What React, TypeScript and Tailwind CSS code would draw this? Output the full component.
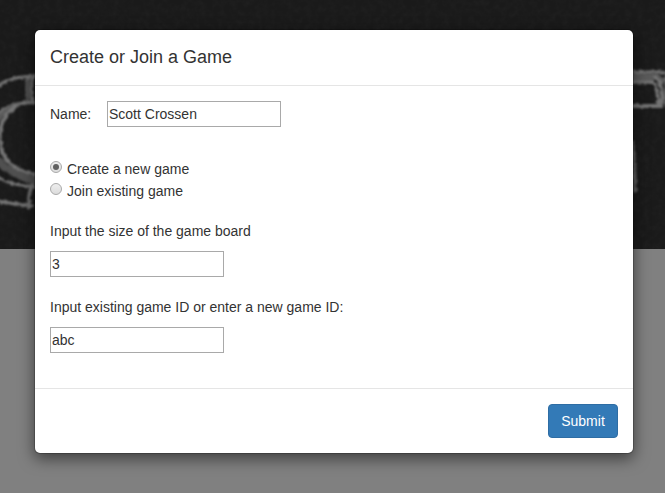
import { useState } from "react";

function Chalkboard() {
  return (
    <svg className="block h-[249px] w-[665px]" viewBox="0 0 665 249" aria-hidden="true">
      <defs>
        <filter id="grain" x="0" y="0" width="100%" height="100%" colorInterpolationFilters="sRGB">
          <feTurbulence type="fractalNoise" baseFrequency="0.16" numOctaves="3" seed="4" />
          <feColorMatrix values="0 0 0 0 0.5  0 0 0 0 0.5  0 0 0 0 0.5  0.5 0 0 0 -0.17" />
        </filter>
        <filter id="chalk" filterUnits="userSpaceOnUse" x="-10" y="0" width="690" height="249" colorInterpolationFilters="sRGB">
          <feTurbulence type="fractalNoise" baseFrequency="0.25" numOctaves="2" seed="8" result="n" />
          <feDisplacementMap in="SourceGraphic" in2="n" scale="4" xChannelSelector="R" yChannelSelector="G" result="d" />
          <feGaussianBlur in="d" stdDeviation="0.9" />
        </filter>
      </defs>
      <rect width="665" height="249" fill="#1a1a1a" />
      <rect width="665" height="249" filter="url(#grain)" opacity="0.18" />
      <g filter="url(#chalk)" fill="none" stroke="#747474" strokeWidth="3" strokeLinecap="round">
        <path d="M-3 87C5 80 16 76 37 76" />
        <path d="M28 78Q26 90 28 101M33 76Q30 90 33 102" />
        <path d="M28 82V100" stroke="#505050" strokeWidth="5" />
        <path d="M-3 115C5 106 16 103 38 102" strokeWidth="3.5" />
        <path d="M-3 122C2 112 8 107 18 104" stroke="#5c5c5c" strokeWidth="4" />
        <path d="M18 105C5 113 -3 126 1 145C3 162 17 172 38 175" strokeWidth="3.5" />
        <path d="M-3 160C6 169 19 177 37 181" stroke="#505050" strokeWidth="8" />
        <path d="M-3 177C7 183 18 186 35 187" />
        <path d="M-3 201C9 203 20 205 32 206M32 185Q28 195 29 207" strokeWidth="3.5" />
        <path d="M628 72H658Q663 71 668 75" strokeWidth="3" />
        <path d="M628 77H656L662 80" stroke="#5a5a5a" strokeWidth="7" />
        <path d="M628 82H651C658 83 657 95 659 106M656 77Q664 87 662 103" strokeWidth="3.5" />
        <path d="M628 106H661" strokeWidth="4" />
        <path d="M667 75V104" stroke="#666" strokeWidth="5" />
        <path d="M632 142Q635 158 635 191" stroke="#626262" strokeWidth="3.5" />
      </g>
    </svg>
  );
}

const inputClass =
  "block h-[26px] w-[174px] border border-[#a9a9a9] bg-white px-px py-0 text-sm leading-5 text-[#333] outline-none";

function Radio({ checked, label, onSelect }: { checked: boolean; label: string; onSelect: () => void }) {
  return (
    <label className="flex h-[22px] items-start gap-[5px]">
      <input type="radio" name="mode" checked={checked} onChange={onSelect} className="sr-only" />
      <span className="mt-[3px] flex size-3 shrink-0 items-center justify-center rounded-full border border-[#a9a9a9] bg-linear-to-b from-[#eeeeee] to-[#dcdcdc]">
        {checked && <span className="size-1.5 rounded-full bg-[#606060]" />}
      </span>
      <span className="pt-px leading-5">{label}</span>
    </label>
  );
}

export default function App() {
  const [mode, setMode] = useState("create");
  return (
    <div className="relative h-[493px] w-[665px] overflow-hidden bg-[#808080] font-['Liberation_Sans',Arial,sans-serif] text-sm text-[#333]">
      <Chalkboard />
      <div
        role="dialog"
        className="absolute top-[29px] left-[34px] flex h-[425px] w-[600px] flex-col rounded-md border border-black/20 bg-white bg-clip-padding shadow-[0_5px_15px_rgba(0,0,0,0.5)]"
      >
        <header className="h-14 border-b border-[#e5e5e5] px-[15px] pt-[14px]">
          <h4 className="text-lg leading-[26px] font-normal">Create or Join a Game</h4>
        </header>
        <main className="flex-1 px-[15px] pt-[15px]">
          <label className="flex items-center">
            <span className="w-[57px]">Name:</span>
            <input className={inputClass} defaultValue="Scott Crossen" />
          </label>
          <div className="mt-[31px]">
            <Radio checked={mode === "create"} label="Create a new game" onSelect={() => setMode("create")} />
            <Radio checked={mode === "join"} label="Join existing game" onSelect={() => setMode("join")} />
          </div>
          <label className="mt-[19px] block leading-5">
            <span className="mb-2.5 block">Input the size of the game board</span>
            <input className={inputClass} defaultValue="3" />
          </label>
          <label className="mt-5 block leading-5">
            <span className="mb-2.5 block">Input existing game ID or enter a new game ID:</span>
            <input className={inputClass} defaultValue="abc" />
          </label>
        </main>
        <footer className="flex h-[65px] justify-end border-t border-[#e5e5e5] p-[15px]">
          <button className="h-[34px] w-[70px] rounded border border-[#2e6da4] bg-[#337ab7] text-sm leading-5 text-white">
            Submit
          </button>
        </footer>
      </div>
    </div>
  );
}
